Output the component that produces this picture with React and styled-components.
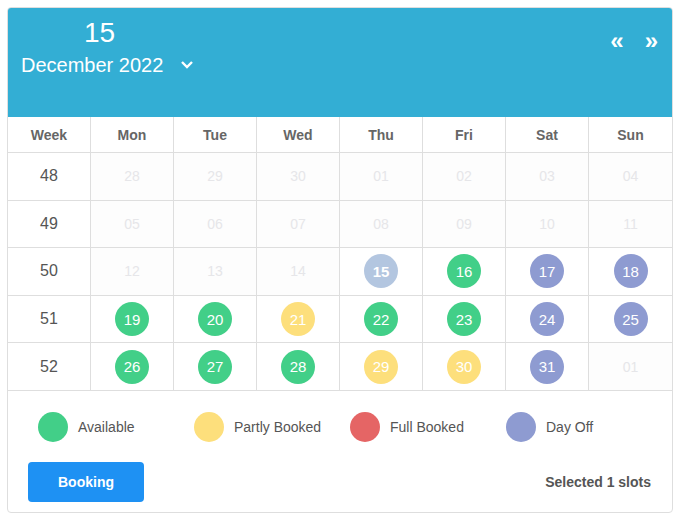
import React from 'react';
import styled, { createGlobalStyle } from 'styled-components';

const GlobalStyle = createGlobalStyle`
  body {
    margin: 0;
    background: #fff;
    font-family: "Liberation Sans", Arial, sans-serif;
  }
`;

const Page = styled.div`
  padding: 7px 9px 7px 7px;
`;

const Card = styled.div`
  width: 666px;
  box-sizing: border-box;
  border: 1px solid #dedede;
  border-radius: 4px;
  overflow: hidden;
  background: #fff;
`;

const Header = styled.div`
  height: 110px;
  margin: -1px -1px 0;
  background: #33aed4;
  color: #fff;
  display: flex;
  justify-content: space-between;
  align-items: flex-start;
  padding: 12px 15px 0 14px;
  box-sizing: border-box;
`;

const DateBlock = styled.div`
  display: flex;
  flex-direction: column;
`;

const DayNumber = styled.div`
  font-size: 28px;
  line-height: 28px;
  padding-left: 63px;
`;

const MonthRow = styled.div`
  display: flex;
  align-items: center;
  gap: 17px;
  margin-top: 6px;
  font-size: 20px;
  line-height: 24px;
`;

const Nav = styled.div`
  display: flex;
  gap: 21px;
  margin-top: 10px;
  font-size: 24px;
  font-weight: bold;
  line-height: 24px;
`;

const Grid = styled.div`
  display: grid;
  grid-template-columns: repeat(8, 1fr);
`;

const HeadCell = styled.div`
  height: 36px;
  display: flex;
  align-items: center;
  justify-content: center;
  font-size: 14px;
  font-weight: bold;
  color: #666;
  border-bottom: 1px solid #dedede;
  border-right: ${p => (p.$last ? 'none' : '1px solid #dedede')};
  box-sizing: border-box;
`;

const Cell = styled.div`
  height: 47.6px;
  display: flex;
  align-items: center;
  justify-content: center;
  border-bottom: 1px solid #dedede;
  border-right: ${p => (p.$last ? 'none' : '1px solid #dedede')};
  box-sizing: border-box;
  background: ${p => (p.$muted ? '#fdfdfd' : '#fff')};
`;

const WeekNo = styled.span`
  font-size: 16px;
  color: #555;
`;

const Muted = styled.span`
  font-size: 14px;
  color: #e6e6e9;
`;

const Dot = styled.span`
  width: 34px;
  height: 34px;
  border-radius: 50%;
  background: ${p => p.$color};
  color: #fff;
  font-size: 15px;
  font-weight: ${p => (p.$bold ? 'bold' : 'normal')};
  display: flex;
  align-items: center;
  justify-content: center;
`;

const Legend = styled.div`
  display: flex;
  padding: 21px 0 0 30px;
`;

const LegendItem = styled.div`
  width: 156px;
  display: flex;
  align-items: center;
  gap: 10px;
  font-size: 14px;
  color: #555;
`;

const Swatch = styled.span`
  width: 30px;
  height: 30px;
  border-radius: 50%;
  background: ${p => p.$color};
`;

const Footer = styled.div`
  display: flex;
  justify-content: space-between;
  align-items: center;
  padding: 20px 21px 10px 20px;
`;

const Button = styled.button`
  width: 116px;
  height: 40px;
  border: none;
  border-radius: 4px;
  background: #1e91f3;
  color: #fff;
  font-family: inherit;
  font-size: 14px;
  font-weight: bold;
`;

const Selected = styled.span`
  font-size: 14px;
  font-weight: bold;
  color: #555;
`;

const C = {
  green: '#42cf88',
  yellow: '#fddf7c',
  red: '#e56565',
  purple: '#8e9bd1',
  today: '#b3c6e0',
};

const days = ['Week', 'Mon', 'Tue', 'Wed', 'Thu', 'Fri', 'Sat', 'Sun'];

const weeks = [
  { no: 48, cells: [['28'], ['29'], ['30'], ['01'], ['02'], ['03'], ['04']] },
  { no: 49, cells: [['05'], ['06'], ['07'], ['08'], ['09'], ['10'], ['11']] },
  { no: 50, cells: [['12'], ['13'], ['14'], ['15', C.today, true], ['16', C.green], ['17', C.purple], ['18', C.purple]] },
  { no: 51, cells: [['19', C.green], ['20', C.green], ['21', C.yellow], ['22', C.green], ['23', C.green], ['24', C.purple], ['25', C.purple]] },
  { no: 52, cells: [['26', C.green], ['27', C.green], ['28', C.green], ['29', C.yellow], ['30', C.yellow], ['31', C.purple], ['01']] },
];

const legend = [
  ['Available', C.green],
  ['Partly Booked', C.yellow],
  ['Full Booked', C.red],
  ['Day Off', C.purple],
];

const Chevron = () => (
  <svg width="14" height="10" viewBox="0 0 14 10">
    <path d="M2 2 L7 7 L12 2" fill="none" stroke="#fff" strokeWidth="2.4" />
  </svg>
);

const App = () => (
  <Page>
    <GlobalStyle />
    <Card>
      <Header>
        <DateBlock>
          <DayNumber>15</DayNumber>
          <MonthRow>
            December 2022
            <Chevron />
          </MonthRow>
        </DateBlock>
        <Nav>
          <span>«</span>
          <span>»</span>
        </Nav>
      </Header>

      <Grid>
        {days.map((d, i) => (
          <HeadCell key={d} $last={i === 7}>{d}</HeadCell>
        ))}
        {weeks.map(w => (
          <React.Fragment key={w.no}>
            <Cell>
              <WeekNo>{w.no}</WeekNo>
            </Cell>
            {w.cells.map(([label, color, bold], i) => (
              <Cell key={i} $last={i === 6} $muted={!color}>
                {color ? <Dot $color={color} $bold={bold}>{label}</Dot> : <Muted>{label}</Muted>}
              </Cell>
            ))}
          </React.Fragment>
        ))}
      </Grid>

      <Legend>
        {legend.map(([name, color]) => (
          <LegendItem key={name}>
            <Swatch $color={color} />
            {name}
          </LegendItem>
        ))}
      </Legend>

      <Footer>
        <Button>Booking</Button>
        <Selected>Selected 1 slots</Selected>
      </Footer>
    </Card>
  </Page>
);

export default App;
